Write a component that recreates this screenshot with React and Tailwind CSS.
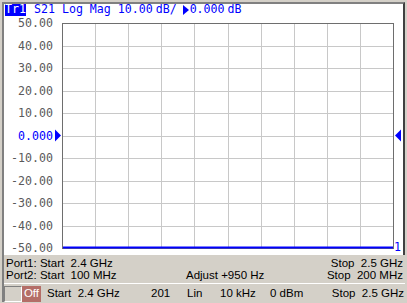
import React from 'react';

const mono = { fontFamily: '"DejaVu Sans Mono", "Liberation Mono", monospace' };

const PLOT_X0 = 58;
const PLOT_X1 = 389;
const PLOT_Y0 = 7;
const PLOT_Y1 = 232;

const yLabels = ['50.00', '40.00', '30.00', '20.00', '10.00', '0.000', '-10.00', '-20.00', '-30.00', '-40.00', '-50.00'];

function Chart() {
  const dx = (PLOT_X1 - PLOT_X0) / 10;
  const dy = (PLOT_Y1 - PLOT_Y0) / 10;
  const cols = Array.from({ length: 9 }, (_, i) => PLOT_X0 + dx * (i + 1));
  const rows = Array.from({ length: 9 }, (_, i) => PLOT_Y0 + dy * (i + 1));
  const midY = PLOT_Y0 + dy * 5;

  return (
    <svg width="400" height="239" className="block shrink-0" style={mono}>
      {cols.map((x) => (
        <line key={'c' + x} x1={Math.round(x) + 0.5} y1={PLOT_Y0} x2={Math.round(x) + 0.5} y2={PLOT_Y1} stroke="#c8c8c8" />
      ))}
      {rows.map((y) => (
        <line key={'r' + y} x1={PLOT_X0} y1={Math.round(y) + 0.5} x2={PLOT_X1} y2={Math.round(y) + 0.5} stroke="#c8c8c8" />
      ))}
      <rect x={PLOT_X0 + 0.5} y={PLOT_Y0 + 0.5} width={PLOT_X1 - PLOT_X0} height={PLOT_Y1 - PLOT_Y0} fill="none" stroke="#6e6e6e" />
      {yLabels.map((t, i) => (
        <text
          key={t}
          x="49"
          y={Math.round(PLOT_Y0 + dy * i) + 4}
          textAnchor="end"
          fontSize="11.6"
          fill={i === 5 ? '#0000ff' : '#5a5a5a'}
        >
          {t}
        </text>
      ))}
      {/* reference markers */}
      <polygon points={`51,${midY - 6} 57,${midY} 51,${midY + 6}`} fill="#0000ff" />
      <polygon points={`397,${midY - 6} 391,${midY} 397,${midY + 6}`} fill="#0000ff" />
      {/* trace */}
      <line x1={PLOT_X0 + 1} y1={PLOT_Y1 - 0.5} x2={PLOT_X1} y2={PLOT_Y1 - 0.5} stroke="#0000ff" strokeWidth="2" />
      <text x="390" y="235" fontSize="11.6" fill="#0000ff">1</text>
    </svg>
  );
}

export default function App() {
  const sans = { fontFamily: '"Liberation Sans", Arial, sans-serif' };

  return (
    <div className="w-[407px] h-[303px] bg-[#d4d0c8] overflow-hidden flex flex-col pl-[2px] pt-[2px] pr-[2px]">
      {/* Trace window */}
      <div className="h-[253px] bg-white border-l-2 border-t-2 border-l-[#808080] border-t-[#808080] border-r-2 border-r-[#404040] flex flex-col">
        <div className="h-[12px] shrink-0 flex items-center text-[11.6px] leading-none text-[#0000ff] whitespace-pre" style={mono}>
          <span className="shrink-0 inline-flex items-center justify-center bg-[#0000ff] text-white min-w-[21px] w-[21px] h-[12px] ml-[1px]">Tr1</span>
          <span className="shrink-0 ml-[8px]">S21 Log Mag 10.00</span>
          <span className="shrink-0 ml-[3px]">dB/</span>
          <svg width="6" height="10" className="shrink-0 ml-[6px]">
            <polygon points="0,0 6,5 0,10" fill="#0000ff" />
          </svg>
          <span className="shrink-0 ml-[1px]">0.000</span>
          <span className="shrink-0 ml-[3px]">dB</span>
        </div>
        <Chart />
      </div>

      {/* Channel info */}
      <div className="flex flex-col text-[11.5px] leading-none text-black border-l-2 border-l-[#808080]" style={sans}>
        <div className="h-[12px] mt-[3px] flex items-center justify-between px-[2px]">
          <span className="whitespace-pre">Port1: Start  2.4 GHz</span>
          <span className="whitespace-pre">Stop  2.5 GHz</span>
        </div>
        <div className="h-[12px] flex items-center px-[2px]">
          <span className="w-[180px] whitespace-pre">Port2: Start  100 MHz</span>
          <span className="whitespace-pre">Adjust +950 Hz</span>
          <span className="ml-auto whitespace-pre">Stop  200 MHz</span>
        </div>
        <div className="h-[3px] mt-[1px] border-t border-white" />
        <div className="h-[16px] flex items-stretch">
          <div className="w-[18px] border-l border-t border-[#808080] border-r border-b border-r-white border-b-white" />
          <div className="w-[19px] bg-[#b46e68] text-white flex items-center justify-center">Off</div>
          <span className="ml-[6px] w-[104px] flex items-center whitespace-pre">Start  2.4 GHz</span>
          <span className="w-[36px] flex items-center">201</span>
          <span className="w-[33px] flex items-center">Lin</span>
          <span className="w-[50px] flex items-center">10 kHz</span>
          <span className="flex items-center">0 dBm</span>
          <span className="ml-auto pr-[1px] flex items-center whitespace-pre">Stop  2.5 GHz</span>
        </div>
      </div>
    </div>
  );
}
